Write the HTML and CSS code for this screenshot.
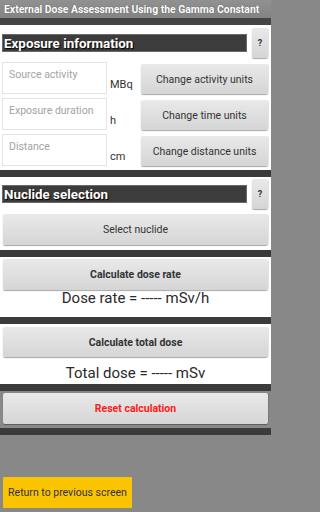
FILE: index.html
```html
<!DOCTYPE html>
<html>
<head>
<meta charset="utf-8">
<link rel="stylesheet" href="styles.css">
</head>
<body>
<div class="screen">
  <div class="titlebar">External Dose Assessment Using the Gamma Constant</div>
  <div class="bar top"></div>

  <section class="panel panel-exposure">
    <div class="head-row">
      <div class="head-label">Exposure information</div>
      <div class="btn help">?</div>
    </div>
    <div class="field-row">
      <div class="input">Source activity</div>
      <div class="unit">MBq</div>
      <div class="btn unit-btn">Change activity units</div>
    </div>
    <div class="field-row">
      <div class="input">Exposure duration</div>
      <div class="unit">h</div>
      <div class="btn unit-btn">Change time units</div>
    </div>
    <div class="field-row">
      <div class="input">Distance</div>
      <div class="unit">cm</div>
      <div class="btn unit-btn">Change distance units</div>
    </div>
  </section>

  <div class="bar"></div>

  <section class="panel panel-nuclide">
    <div class="head-row">
      <div class="head-label">Nuclide selection</div>
      <div class="btn help">?</div>
    </div>
    <div class="btn wide select-btn">Select nuclide</div>
  </section>

  <div class="bar"></div>

  <section class="panel panel-rate">
    <div class="btn wide bold calc-btn">Calculate dose rate</div>
    <div class="result rate-result">Dose rate = ----- mSv/h</div>
  </section>

  <div class="bar"></div>

  <section class="panel panel-total">
    <div class="btn wide bold calc-btn total-btn">Calculate total dose</div>
    <div class="result total-result">Total dose = ----- mSv</div>
  </section>

  <div class="bar"></div>

  <section class="panel-reset">
    <div class="btn wide bold reset-btn">Reset calculation</div>
  </section>

  <div class="bar"></div>

  <div class="footer">
    <div class="return-btn">Return to previous screen</div>
  </div>
</div>
</body>
</html>
```

FILE: styles.css
```css
html, body {
  margin: 0;
  padding: 0;
}
body {
  width: 271px;
  height: 512px;
  overflow: hidden;
  background: #888888;
  font-family: Roboto, "Liberation Sans", sans-serif;
}
.screen {
  display: flex;
  flex-direction: column;
  height: 512px;
}
.titlebar {
  height: 18px;
  line-height: 19px;
  background: linear-gradient(#919191, #838383);
  color: #ffffff;
  font-weight: bold;
  font-size: 10.4px;
  padding-left: 4px;
  white-space: nowrap;
  text-shadow: 0 0 1px rgba(0,0,0,0.45);
}
.bar {
  height: 7px;
  background: #3b3b3b;
  flex: none;
}
.bar.top {
  background: #454545;
}
.panel {
  background: #ffffff;
  display: flex;
  flex-direction: column;
}
.panel-exposure {
  height: 145px;
  padding-top: 3px;
  box-sizing: border-box;
}
.head-row {
  display: flex;
  align-items: center;
  height: 30px;
  padding: 0 3px 0 2px;
  gap: 5px;
}
.head-label {
  flex: 1;
  height: 16px;
  line-height: 17px;
  background: #3c3c3c;
  border: 1px solid #6a6a6a;
  color: #ffffff;
  font-weight: bold;
  font-size: 13.4px;
  padding-left: 1px;
  text-shadow: 1px 1px 1px #000000;
  white-space: nowrap;
  overflow: hidden;
}
.btn {
  background: linear-gradient(#e9e9e9, #d5d5d5);
  border-radius: 2px;
  box-shadow: 0 1px 1px rgba(0,0,0,0.35), 1px 0 0 rgba(0,0,0,0.08);
  color: #333333;
  font-size: 10.5px;
  display: flex;
  align-items: center;
  justify-content: center;
  white-space: nowrap;
}
.help {
  width: 16px;
  height: 30px;
  font-size: 9px;
  font-weight: bold;
  flex: none;
}
.field-row {
  display: flex;
  height: 32px;
  margin-top: 4px;
  padding: 0 3px 0 2px;
}
.input {
  border: 1px solid #e4e4e4;
  background: #ffffff;
  color: #a3a3a3;
  font-size: 10.5px;
  padding: 5px 0 0 6px;
  box-sizing: border-box;
  height: 32px;
  width: 105px;
  flex: none;
}
.unit {
  width: 34px;
  flex: none;
  font-size: 11px;
  color: #333333;
  padding-left: 3px;
  padding-top: 16px;
  box-sizing: border-box;
}
.unit-btn {
  flex: 1;
  height: 30px;
  margin-top: 2px;
}
.panel-nuclide {
  height: 73px;
  padding-top: 2px;
  box-sizing: border-box;
}
.wide {
  height: 31px;
  margin: 0 3px;
}
.select-btn {
  margin-top: 5px;
}
.bold {
  font-weight: bold;
}
.panel-rate {
  height: 60px;
  padding-top: 2px;
  box-sizing: border-box;
}
.panel-total {
  height: 60px;
  padding-top: 3px;
  box-sizing: border-box;
}
.total-btn {
  height: 30px;
}
.result {
  text-align: center;
  color: #2a2a2a;
  font-size: 15px;
  line-height: 18px;
  white-space: nowrap;
}
.rate-result {
  margin-top: -1px;
}
.total-result {
  margin-top: 7px;
}
.panel-reset {
  height: 37px;
  padding-top: 2px;
  box-sizing: border-box;
  background: #888888;
}
.reset-btn {
  color: #ff1a1a;
}
.footer {
  flex: 1;
  background: #888888;
  padding: 42px 0 0 3px;
}
.return-btn {
  width: 129px;
  height: 31px;
  background: #fac402;
  border-radius: 1px;
  color: #333333;
  font-size: 10.5px;
  display: flex;
  align-items: center;
  justify-content: center;
  white-space: nowrap;
}
```
